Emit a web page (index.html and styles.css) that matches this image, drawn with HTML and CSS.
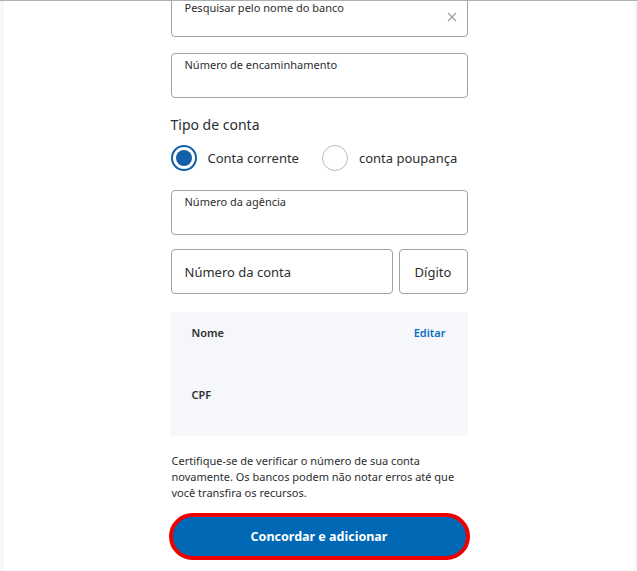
FILE: index.html
```html
<!DOCTYPE html>
<html lang="pt-BR">

<head>
    <meta charset="UTF-8">
    <meta name="viewport" content="width=device-width, initial-scale=1.0">
    <title>Adicionar conta bancária</title>
    <link rel="stylesheet" href="styles.css">
</head>

<body>
    <div class="page">
        <form class="bank-form">
            <div class="field field-search">
                <label for="banco">Pesquisar pelo nome do banco</label>
                <input type="text" id="banco" name="banco">
                <span class="clear">
                    <svg width="10" height="10" viewBox="0 0 10 10">
                        <path d="M1 1 L9 9 M9 1 L1 9" stroke="#9aa0a6" stroke-width="1.2" fill="none" />
                    </svg>
                </span>
            </div>

            <div class="field">
                <label for="encaminhamento">Número de encaminhamento</label>
                <input type="text" id="encaminhamento" name="encaminhamento">
            </div>

            <fieldset class="account-type">
                <legend>Tipo de conta</legend>
                <div class="radios">
                    <label class="radio">
                        <input type="radio" name="tipo" value="corrente" checked>
                        <span class="dot"></span>
                        Conta corrente
                    </label>
                    <label class="radio">
                        <input type="radio" name="tipo" value="poupanca">
                        <span class="dot"></span>
                        conta poupança
                    </label>
                </div>
            </fieldset>

            <div class="field">
                <label for="agencia">Número da agência</label>
                <input type="text" id="agencia" name="agencia">
            </div>

            <div class="row">
                <div class="box box-account">Número da conta</div>
                <div class="box box-digit">Dígito</div>
            </div>

            <div class="summary">
                <div class="summary-line">
                    <span>Nome</span>
                    <a href="#" class="edit">Editar</a>
                </div>
                <div class="summary-line">
                    <span>CPF</span>
                </div>
            </div>

            <p class="note">Certifique-se de verificar o número de sua conta novamente. Os bancos podem não notar erros até que você transfira os recursos.</p>

            <button type="submit">Concordar e adicionar</button>
        </form>
    </div>
</body>

</html>
```

FILE: styles.css
```css
body {
    font-family: 'Noto Sans', sans-serif;
    background-color: #f5f7fa;
    margin: 0;
    padding: 0;
    border-top: 1px solid #a9b1b1;
    height: 570px;
    overflow: hidden;
    color: #2c2e2f;
}

.page {
    background: white;
    margin: 0 3px 0 4px;
    height: 100%;
    display: flex;
    justify-content: center;
}

.bank-form {
    width: 297px;
    display: flex;
    flex-direction: column;
    margin-top: -5px;
}

.field {
    position: relative;
    height: 45px;
    border: 1px solid #9da3a6;
    border-radius: 4px;
    box-sizing: border-box;
    margin-bottom: 9px;
}

.field-search {
    height: 41px;
    margin-bottom: 16px;
}

.field-search label {
    top: 1px;
}

.field label {
    position: absolute;
    left: 13px;
    top: 3px;
    font-size: 11px;
    color: #2c2e2f;
}

.field input {
    border: none;
    outline: none;
    background: transparent;
    width: 100%;
    height: 100%;
}

.clear {
    position: absolute;
    right: 10px;
    top: 15px;
    line-height: 0;
}

.account-type {
    border: none;
    margin: 8px 0 19px;
    padding: 0;
}

.account-type legend {
    padding: 0;
    font-size: 14px;
    line-height: 20px;
    margin-bottom: 10px;
}

.radios {
    display: flex;
    gap: 23px;
}

.radio {
    display: flex;
    align-items: center;
    gap: 11px;
    font-size: 13px;
    white-space: nowrap;
    cursor: pointer;
}

.radio input {
    display: none;
}

.dot {
    width: 26px;
    height: 26px;
    box-sizing: border-box;
    border-radius: 50%;
    border: 1px solid #b8bcbf;
    display: flex;
    align-items: center;
    justify-content: center;
}

.radio input:checked + .dot {
    border: 2px solid #1160a8;
}

.radio input:checked + .dot::after {
    content: "";
    width: 16px;
    height: 16px;
    border-radius: 50%;
    background: #1160a8;
}

.row {
    display: flex;
    gap: 6px;
    margin-top: 5px;
    margin-bottom: 18px;
}

.box {
    height: 45px;
    box-sizing: border-box;
    border: 1px solid #9da3a6;
    border-radius: 4px;
    display: flex;
    align-items: center;
    font-size: 13px;
}

.box-account {
    flex: 1;
    padding-left: 13px;
}

.box-digit {
    width: 69px;
    justify-content: center;
}

.summary {
    background: #f5f7fa;
    height: 124px;
    padding: 13px 22px 0 21px;
    box-sizing: border-box;
    display: flex;
    flex-direction: column;
    gap: 46px;
}

.summary-line {
    display: flex;
    justify-content: space-between;
    font-size: 11px;
    font-weight: 600;
    line-height: 16px;
}

.edit {
    color: #0a6fc2;
    text-decoration: none;
}

.note {
    font-size: 11px;
    line-height: 16px;
    margin: 17px 0 12px 1px;
    padding-right: 10px;
}

button {
    height: 47px;
    margin: 0 -2px;
    background-color: #0068b5;
    color: white;
    border: 4px solid #ee0000;
    border-radius: 24px;
    font-family: 'Noto Sans', sans-serif;
    font-size: 12.5px;
    font-weight: 700;
    cursor: pointer;
}
```
